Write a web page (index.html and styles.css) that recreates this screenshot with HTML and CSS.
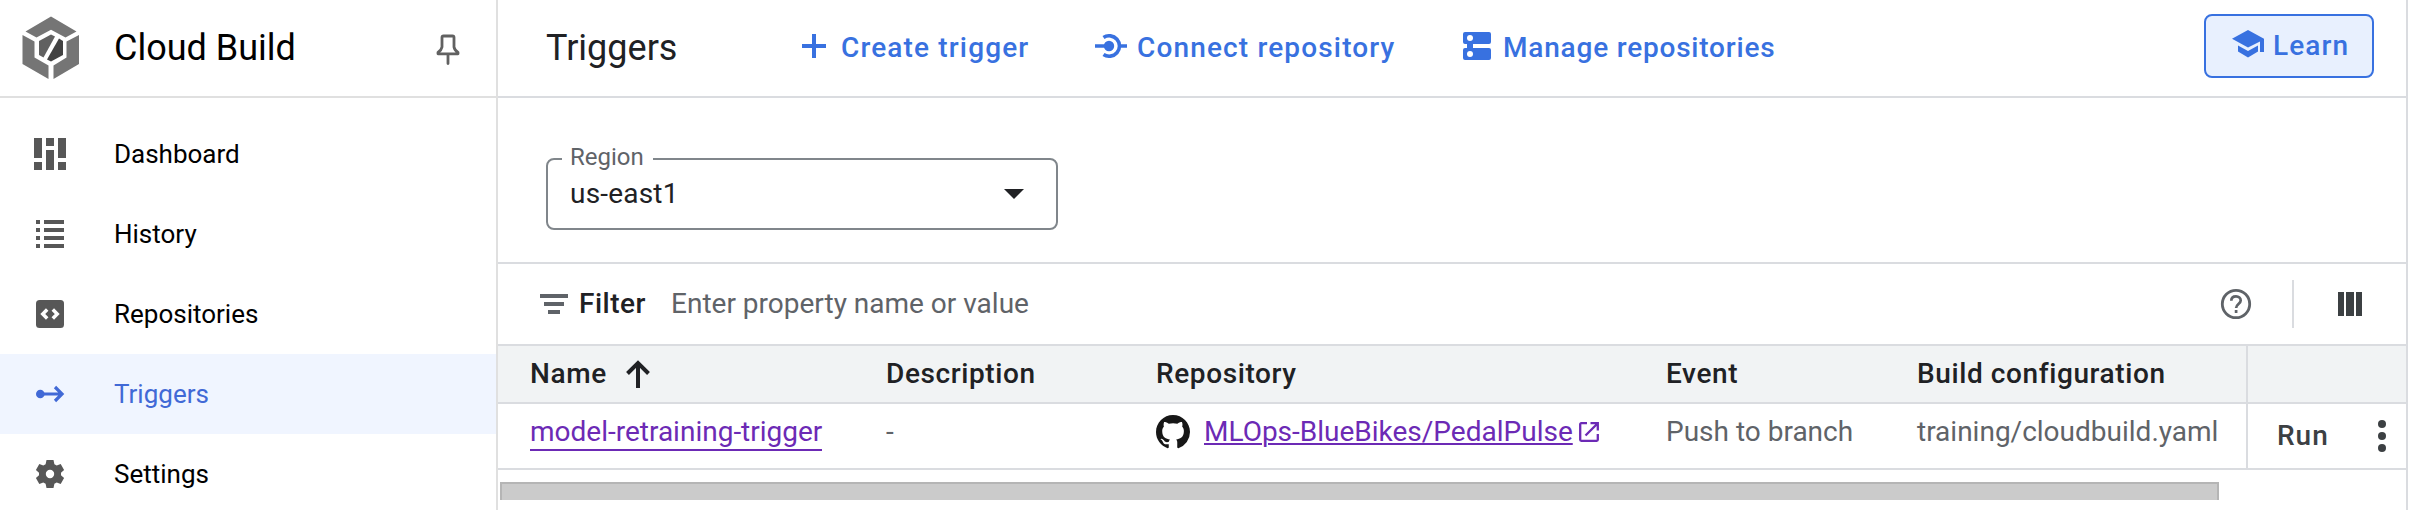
FILE: index.html
```html
<!DOCTYPE html>
<html lang="en">
<head>
<meta charset="utf-8">
<title>Cloud Build – Triggers</title>
<link rel="stylesheet" href="styles.css">
</head>
<body>
<div class="app">
  <aside class="sidebar">
    <div class="brand">
      <svg class="brand-logo" width="58" height="64" viewBox="0 0 58 64">
        <path fill="#757575" d="M29 0.5 54.5 15.5 43.5 21.5 29 13.8 14.5 21.5 3.5 15.5z"/>
        <path fill="#757575" d="M.5 19 12.5 25.5V41.5L26.5 49.5V63L.5 48z"/>
        <path fill="#757575" d="M57 19 44.500 25.500V41.500L31.500 49.500V63L57 48z"/>
        <path fill="#616161" d="M29 18.500 33 20.500 21.500 41.500 17 39V25z"/>
        <path fill="#424242" d="M37 22.500 41 25V39L29 45.500 25 43.500z"/>
      </svg>
      <span class="brand-name">Cloud Build</span>
      <svg class="pin" width="24" height="32" viewBox="0 0 24 32" fill="none" stroke="#616161" stroke-width="2.800" stroke-linejoin="round" stroke-linecap="round">
        <path d="M7.500 2h9q1.500 0 1.500 1.500V13q.5 3 4 5.500v1.300H2V18.500q3.500-2.500 4-5.500V3.500Q6 2 7.500 2zM12 20v9.500"/>
      </svg>
    </div>
    <nav class="nav">
      <a class="nav-item">
        <svg class="nav-icon" width="32" height="32" viewBox="0 0 32 32" fill="#575757"><path d="M0 0h8v20H0zM0 24h8v8H0zM12 0h8v8h-8zM12 12h8v20h-8zM24 0h8v20h-8zM24 24h8v8h-8z"/></svg>
        <span>Dashboard</span>
      </a>
      <a class="nav-item">
        <svg class="nav-icon" width="32" height="32" viewBox="0 0 32 32" fill="#575757"><path d="M2 2h4v4H2zM2 10h4v4H2zM2 18h4v4H2zM2 26h4v4H2zM10 2h20v4H10zM10 10h20v4H10zM10 18h20v4H10zM10 26h20v4H10z"/></svg>
        <span>History</span>
      </a>
      <a class="nav-item">
        <svg class="nav-icon" width="32" height="32" viewBox="0 0 32 32"><rect x="2" y="2" width="28" height="28" rx="3.500" fill="#575757"/><path fill="none" stroke="#fff" stroke-width="3.500" d="M13.200 11.600 8.800 16l4.400 4.400M18.800 11.600 23.200 16l-4.400 4.400"/></svg>
        <span>Repositories</span>
      </a>
      <a class="nav-item nav-item-active">
        <svg class="nav-icon" width="32" height="32" viewBox="0 0 32 32"><circle cx="6.300" cy="16" r="4.300" fill="#4169d6"/><path fill="none" stroke="#4169d6" stroke-width="3.200" d="M6 16h22M21 9l7 7-7 7"/></svg>
        <span>Triggers</span>
      </a>
      <a class="nav-item">
        <svg class="nav-icon" width="32" height="32" viewBox="0 0 32 32"><path fill="#575757" fill-rule="evenodd" d="M12.500 2h7l.9 4.300 2.300 1.300 4-1.500 3.400 5.800-3.100 2.900v2.400l3.100 2.900-3.400 5.800-4-1.500-2.300 1.300-.9 4.300h-7l-.9-4.300-2.300-1.300-4 1.500-3.400-5.800L5 17.200v-2.400l-3.100-2.900 3.400-5.800 4 1.500 2.300-1.300zM16 11.800a4.200 4.200 0 1 0 0 8.400 4.200 4.200 0 0 0 0-8.400z"/></svg>
        <span>Settings</span>
      </a>
    </nav>
  </aside>

  <main class="main">
    <header class="toolbar">
      <h1 class="page-title">Triggers</h1>
      <div class="actions">
        <a class="action action-create">
          <svg width="24" height="24" viewBox="0 0 24 24"><path d="M10 0h4v10h10v4H14v10h-4V14H0v-4h10z" fill="#3871e0"/></svg>
          <span>Create trigger</span>
        </a>
        <a class="action action-connect">
          <svg width="32" height="24" viewBox="0 0 32 24"><circle cx="14" cy="12" r="5.200" fill="#3871e0"/><path fill="none" stroke="#3871e0" stroke-width="3.600" d="M0 12h12M25 12h7M8.500 3.600A10.200 10.200 0 1 1 8.500 20.400"/></svg>
          <span>Connect repository</span>
        </a>
        <a class="action action-manage">
          <svg width="28" height="28" viewBox="0 0 28 28"><path fill="#3871e0" d="M2 0h24a2 2 0 0 1 2 2v8a2 2 0 0 1-2 2H10v4h16a2 2 0 0 1 2 2v8a2 2 0 0 1-2 2H2a2 2 0 0 1-2-2v-8a2 2 0 0 1 2-2h2v-4H2a2 2 0 0 1-2-2V2a2 2 0 0 1 2-2z"/><circle cx="7" cy="6" r="3" fill="#fff"/><circle cx="7" cy="22" r="3" fill="#fff"/></svg>
          <span>Manage repositories</span>
        </a>
      </div>
      <button class="learn">
        <svg width="32" height="28" viewBox="0 0 32 28" fill="#3871e0"><path d="M16 0 32 8.700V22h-4V11.500L16 17.500 0 8.700z"/><path d="M6 15.500 16 21l10-5.500v6L16 27.500 6 21.500z"/></svg>
        <span>Learn</span>
      </button>
    </header>

    <section class="region-section">
      <fieldset class="select">
        <legend>Region</legend>
        <div class="select-value"><span>us-east1</span>
          <svg width="20" height="10" viewBox="0 0 20 10"><path d="M0 0h20L10 10z" fill="#202124"/></svg>
        </div>
      </fieldset>
    </section>

    <div class="filter-bar">
      <svg width="28" height="20" viewBox="0 0 28 20" fill="#5f6368"><path d="M0 0h28v4H0zM4 8h20v4H4zM8 16h12v4H8z"/></svg>
      <span class="filter-label">Filter</span>
      <span class="filter-placeholder">Enter property name or value</span>
      <div class="filter-tools">
        <svg width="32" height="32" viewBox="0 0 32 32" fill="none" stroke="#5f6368"><circle cx="16" cy="16" r="13.700" stroke-width="2.800"/><path stroke-width="2.700" d="M11.300 12.700C11.300 9.900 13.300 8.300 16 8.300s4.700 1.700 4.700 4.200c0 3.300-4.600 3.800-4.600 7.500M16.100 22v3"/></svg>
        <span class="tool-divider"></span>
        <svg width="24" height="24" viewBox="0 0 24 24" fill="#3c4043"><path d="M0 0h6v24H0zM8 0h8v24H8zM18 0h6v24h-6z"/></svg>
      </div>
    </div>

    <div class="table">
      <div class="row row-head">
        <div class="cell cell-name">Name
          <svg width="24" height="28" viewBox="0 0 24 28"><path fill="none" stroke="#202124" stroke-width="4" d="M12 28V3M1.500 13.500 12 3l10.500 10.500"/></svg>
        </div>
        <div class="cell">Description</div>
        <div class="cell">Repository</div>
        <div class="cell">Event</div>
        <div class="cell">Build configuration</div>
        <div class="cell cell-actions"></div>
      </div>
      <div class="row row-body">
        <div class="cell"><a class="trigger-link">model-retraining-trigger</a></div>
        <div class="cell">-</div>
        <div class="cell cell-repo">
          <svg class="github" width="34" height="34" viewBox="0 0 16 16"><path fill="#171717" d="M8 0C3.580 0 0 3.580 0 8c0 3.540 2.290 6.530 5.470 7.590.4.070.55-.17.55-.38 0-.19-.01-.82-.01-1.490-2.010.37-2.530-.49-2.690-.94-.09-.23-.48-.94-.82-1.130-.28-.15-.68-.52-.01-.53.63-.01 1.080.58 1.230.82.72 1.210 1.870.87 2.330.66.07-.52.28-.87.51-1.070-1.780-.2-3.640-.89-3.640-3.950 0-.87.31-1.590.82-2.150-.08-.2-.36-1.020.08-2.120 0 0 .67-.21 2.200.82.64-.18 1.320-.27 2-.27s1.360.09 2 .27c1.530-1.040 2.200-.82 2.200-.82.44 1.100.16 1.920.08 2.120.51.56.82 1.270.82 2.150 0 3.070-1.870 3.750-3.650 3.950.29.25.54.73.54 1.480 0 1.070-.01 1.930-.01 2.200 0 .21.15.46.55.38A8.010 8.010 0 0 0 16 8c0-4.420-3.580-8-8-8z"/></svg>
          <a class="repo-link">MLOps-BlueBikes/PedalPulse</a>
          <svg class="external" width="20" height="20" viewBox="0 0 20 20" fill="none" stroke="#6c2ab5" stroke-width="2.300"><path d="M8 1.200H2.200a1 1 0 0 0-1 1v15.600a1 1 0 0 0 1 1h15.600a1 1 0 0 0 1-1V12M11.500 1.200h7.300v7.300M18.500 1.500 6.500 13.500"/></svg>
        </div>
        <div class="cell">Push to branch</div>
        <div class="cell">training/cloudbuild.yaml</div>
        <div class="cell cell-actions">
          <span class="run">Run</span>
          <svg width="8" height="32" viewBox="0 0 8 32" fill="#3c4043"><circle cx="4" cy="4" r="4"/><circle cx="4" cy="16" r="4"/><circle cx="4" cy="28" r="4"/></svg>
        </div>
      </div>
    </div>
    <div class="scrollbar"><div class="scroll-thumb"></div></div>
  </main>
</div>
</body>
</html>
```
FILE: styles.css
```css
* { box-sizing: border-box; }
body {
  margin: 0;
  background: #fff;
  color: #202124;
  font-family: Roboto, sans-serif;
  font-size: 28px;
  overflow: hidden;
}
svg { display: block; flex: none; }
.app { display: flex; width: 2410px; height: 510px; overflow: hidden; }

.sidebar { width: 498px; flex: none; border-right: 2px solid #e0e0e0; }
.brand {
  display: flex;
  align-items: center;
  height: 98px;
  padding-left: 22px;
  border-bottom: 2px solid #e0e0e0;
  color: #000;
}
.brand-name { margin-left: 34px; font-size: 36px; line-height: 42px; }
.pin { margin-left: auto; margin-right: 36px; margin-top: 4px; }
.nav { padding-top: 16px; }
.nav-item {
  display: flex;
  align-items: center;
  height: 80px;
  padding-left: 34px;
  font-size: 26px;
  line-height: 32px;
  color: #000;
}
.nav-icon { margin-right: 48px; }
.nav-item-active { background: #f0f5ff; color: #4169d6; }

.main { width: 1910px; flex: none; border-right: 2px solid #dadce0; }
.toolbar {
  display: flex;
  align-items: center;
  height: 98px;
  padding: 0 32px 0 48px;
  border-bottom: 2px solid #dadce0;
}
.page-title { margin: 0; width: 256px; font-size: 36px; font-weight: 400; line-height: 42px; }
.actions { display: flex; align-items: center; margin-bottom: 2px; height: 40px; }
.action {
  display: flex;
  align-items: center;
  color: #3871e0;
  font-weight: 500;
  letter-spacing: 1.15px;
  white-space: nowrap;
}
.action svg { margin-top: -2px; }
.action-create { width: 293px; gap: 15px; }
.action-connect { width: 368px; gap: 10px; }
.action-manage { gap: 12px; letter-spacing: .8px; }
.learn {
  display: flex;
  align-items: center;
  gap: 9px;
  width: 170px;
  height: 64px;
  margin: 0 0 4px auto;
  padding: 0 0 1px 26px;
  border: 2px solid #3871e0;
  border-radius: 8px;
  background: #e8f0fe;
  color: #3871e0;
  font: 500 28px Roboto, sans-serif;
  letter-spacing: 1.1px;
}
.learn svg { margin-top: -4px; }

.region-section { height: 166px; padding: 43px 48px 0; border-bottom: 2px solid #dadce0; }
.select {
  width: 512px;
  height: 89px;
  margin: 0;
  padding: 0 32px 0 14px;
  border: 2px solid #80868b;
  border-radius: 8px;
}
.select legend { height: 36px; padding: 0 9px 0 8px; color: #5f6368; font-size: 24px; line-height: 32px; }
.select-value { display: flex; align-items: center; justify-content: space-between; height: 33px; padding-left: 8px; letter-spacing: .2px; }

.filter-bar {
  display: flex;
  align-items: center;
  height: 82px;
  padding-left: 42px;
  border-bottom: 2px solid #dadce0;
}
.filter-label, .filter-placeholder { margin-top: -1px; }
.filter-label { width: 92px; margin-left: 11px; font-weight: 500; letter-spacing: .5px; }
.filter-placeholder { color: #5f6368; }
.filter-tools { display: flex; align-items: center; margin-left: auto; padding-right: 44px; }
.tool-divider { width: 2px; height: 48px; margin: 0 44px 0 40px; background: #dadce0; }

.row {
  display: grid;
  grid-template-columns: 356px 270px 510px 251px 329px 160px;
  padding-left: 32px;
  border-bottom: 2px solid #dadce0;
  white-space: nowrap;
}
.cell { display: flex; align-items: center; }
.row-head { height: 58px; background: #f1f3f4; font-weight: 500; letter-spacing: .6px; }
.row-head .cell { padding-bottom: 1px; }
.cell-name { gap: 19px; }
.row-body { height: 66px; color: #5f6368; }
.row-body .cell { padding-bottom: 9px; }
.trigger-link { border-bottom: 2px solid #6c2ab5; color: #6c2ab5; line-height: 34px; margin-top: 2px; }
.repo-link { margin-left: 14px; color: #6c2ab5; text-decoration: underline; text-decoration-thickness: 2px; text-underline-offset: 2px; }
.cell-repo .external { margin-left: 6px; margin-top: 1px; }
.cell-actions { border-left: 2px solid #dadce0; }
.row-body .cell-actions { justify-content: space-between; padding: 0 20px 0 29px; }
.run { margin-top: -1px; color: #3c4043; font-weight: 500; letter-spacing: 1px; }

.scrollbar { padding: 12px 0 0 2px; }
.scroll-thumb { width: 1719px; height: 18px; border: solid #b5b5b5; border-width: 2px 2px 0; background: #cbcbcb; }
```
